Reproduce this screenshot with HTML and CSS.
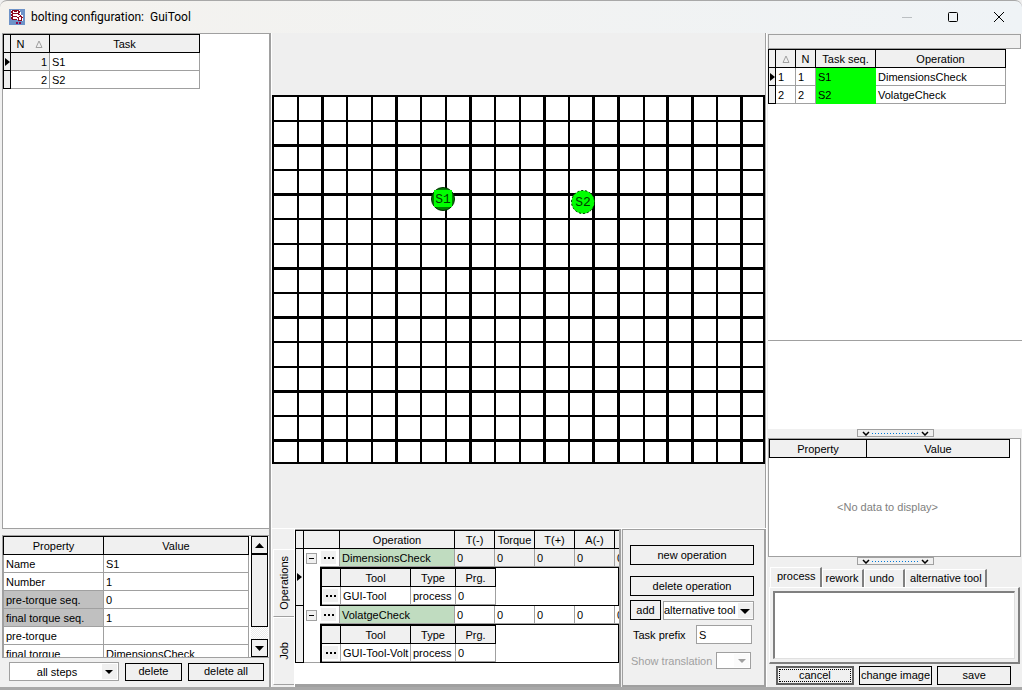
FILE: index.html
```html
<!DOCTYPE html>
<html lang="en">
<head>
<meta charset="utf-8">
<title>bolting configuration: GuiTool</title>
<link rel="stylesheet" href="styles.css">
</head>
<body>
<div class="window">
  <header class="titlebar">
    <svg class="app-icon" viewBox="0 0 16 16" shape-rendering="crispEdges">
      <rect width="16" height="16" fill="#6e93c8"/>
      <path d="M2 1h9v2h1v3h2v6h-4v-1H3v-1H2z" fill="#fff"/>
      <path d="M3 1h7v1H3zM2 2h2v2H2zM9 2h2v2H9zM3 4h7v1H3zM2 5h2v2H2zM3 7h5v1H3zM2 8h2v2H2zM3 10h5v1H3zM5 2h3v1H5zM9 5h2v1H9zM11 6h1v1h-1zM8 8h2v1H8zM10 7h3v1h-3zM12 8h2v1h-2zM9 9h1v3H9zM10 11h3v1h-3zM12 9h1v2h-1z" fill="#8c0c20"/>
      <path d="M7 13h2v2H7zM10 13h2v2h-2z" fill="#8c0c50"/>
    </svg>
    <h1 class="title">bolting configuration:&nbsp; GuiTool</h1>
    <button class="caption-button" type="button" aria-label="Minimize" disabled><svg viewBox="0 0 12 12"><path d="M1 6.500h10" stroke="#bbbfc2" fill="none"/></svg></button>
    <button class="caption-button" type="button" aria-label="Maximize"><svg viewBox="0 0 12 12"><rect x="1.500" y="1.500" width="9" height="9" rx="1" stroke="#000" fill="none"/></svg></button>
    <button class="caption-button" type="button" aria-label="Close"><svg viewBox="0 0 12 12"><path d="M1 1l10 10M11 1L1 11" stroke="#000" fill="none"/></svg></button>
  </header>

  <main class="workspace">
    <section class="left">
      <div class="task-list">
        <table class="grid task-table">
          <colgroup><col class="c-ind"><col class="c-n"><col class="c-task"></colgroup>
          <thead><tr><th class="first"></th><th class="sorted"><span>N</span><svg class="sort" viewBox="0 0 8 8"><path d="M4 1L1 7.500h6z"/></svg></th><th>Task</th></tr></thead>
          <tbody>
            <tr><td class="ind"><i class="pointer"></i></td><td class="num focused">1</td><td>S1</td></tr>
            <tr><td class="ind"></td><td class="num">2</td><td>S2</td></tr>
          </tbody>
        </table>
      </div>
      <div class="properties">
        <div class="prop-scroll">
          <div class="prop-view">
            <table class="grid prop-table">
              <colgroup><col class="c-prop"><col></colgroup>
              <thead><tr><th class="first">Property</th><th>Value</th></tr></thead>
              <tbody>
                <tr><td>Name</td><td>S1</td></tr>
                <tr><td>Number</td><td>1</td></tr>
                <tr><td class="locked">pre-torque seq.</td><td>0</td></tr>
                <tr><td class="locked">final torque seq.</td><td>1</td></tr>
                <tr><td>pre-torque</td><td></td></tr>
                <tr><td>final torque</td><td>DimensionsCheck</td></tr>
              </tbody>
            </table>
          </div>
          <div class="scrollbar">
            <button type="button" class="scroll-button" aria-label="Scroll up"><svg viewBox="0 0 9 5"><path d="M0 5L4.500 0L9 5z"/></svg></button>
            <div class="thumb"></div>
            <button type="button" class="scroll-button down" aria-label="Scroll down"><svg viewBox="0 0 9 5"><path d="M0 0h9L4.500 5z"/></svg></button>
          </div>
        </div>
        <div class="prop-actions">
          <span class="combo steps"><select aria-label="Steps"><option>all steps</option></select></span>
          <button type="button" class="button">delete</button>
          <button type="button" class="button wide">delete all</button>
        </div>
      </div>
    </section>

    <section class="center">
      <div class="canvas">
        <svg viewBox="0 0 493 369" role="img" aria-label="Task positions">
          <rect width="493" height="369" fill="#fff"/>
          <g stroke="#000" shape-rendering="crispEdges">
            <path stroke-width="2" d="M1 0v369M26 0v369M75 0v369M100 0v369M149 0v369M174 0v369M223 0v369M248 0v369M297 0v369M372 0v369M445 0v369M492 0v369M0 1h493M0 26h493M0 75h493M0 124h493M0 149h493M0 198h493M0 247h493M0 272h493M0 321h493M0 368h493"/>
            <path stroke-width="3" d="M50.500 0v369M124.500 0v369M198.500 0v369M272.500 0v369M321.500 0v369M346.500 0v369M395.500 0v369M420.500 0v369M469.500 0v369M0 50.500h493M0 99.500h493M0 173.500h493M0 222.500h493M0 296.500h493M0 345.500h493"/>
          </g>
          <g class="marker">
            <circle cx="171" cy="104" r="11.500" fill="#008000" stroke="#003000"/>
            <rect x="162" y="95" width="18" height="17" fill="#00ff00"/>
            <text x="171" y="108">S1</text>
          </g>
          <g class="marker">
            <circle cx="311" cy="107" r="11.500" fill="#00ff00" stroke="#003000" stroke-dasharray="2 2"/>
            <text x="311" y="111">S2</text>
          </g>
        </svg>
      </div>

      <div class="operations">
        <nav class="side-tabs">
          <button type="button" class="side-tab active"><span>Operations</span></button>
          <button type="button" class="side-tab"><span>Job</span></button>
        </nav>
        <div class="op-view">
          <table class="grid op-table">
            <colgroup><col class="c-opind"><col class="c-exp"><col class="c-dots"><col class="c-op"><col class="c-val"><col class="c-val"><col class="c-val"><col class="c-val"><col></colgroup>
            <thead><tr><th class="first"></th><th colspan="2"></th><th>Operation</th><th>T(-)</th><th>Torque</th><th>T(+)</th><th>A(-)</th><th class="last"></th></tr></thead>
            <tbody>
              <tr class="focused-row"><td class="ind" rowspan="2"><i class="pointer"></i></td><td class="exp"><button type="button" class="expander" aria-label="Collapse"></button></td><td class="tools"><button type="button" class="dots" aria-label="More"><i></i><i></i><i></i></button></td><td class="op-name">DimensionsCheck</td><td>0</td><td>0</td><td>0</td><td>0</td><td class="last">0</td></tr>
              <tr><td class="gutter"></td><td class="detail" colspan="7">
                <table class="grid tool-table">
                  <colgroup><col class="c-tdots"><col class="c-tool"><col class="c-type"><col class="c-prg"></colgroup>
                  <thead><tr><th></th><th>Tool</th><th>Type</th><th>Prg.</th></tr></thead>
                  <tbody><tr><td class="tools"><button type="button" class="dots" aria-label="More"><i></i><i></i><i></i></button></td><td>GUI-Tool</td><td>process</td><td>0</td></tr></tbody>
                </table></td></tr>
              <tr><td class="ind" rowspan="2"></td><td class="exp"><button type="button" class="expander" aria-label="Collapse"></button></td><td class="tools"><button type="button" class="dots" aria-label="More"><i></i><i></i><i></i></button></td><td class="op-name">VolatgeCheck</td><td>0</td><td>0</td><td>0</td><td>0</td><td class="last">0</td></tr>
              <tr><td class="gutter end"></td><td class="detail" colspan="7">
                <table class="grid tool-table">
                  <colgroup><col class="c-tdots"><col class="c-tool"><col class="c-type"><col class="c-prg"></colgroup>
                  <thead><tr><th></th><th>Tool</th><th>Type</th><th>Prg.</th></tr></thead>
                  <tbody><tr><td class="tools"><button type="button" class="dots" aria-label="More"><i></i><i></i><i></i></button></td><td>GUI-Tool-Volt</td><td>process</td><td>0</td></tr></tbody>
                </table></td></tr>
            </tbody>
          </table>
        </div>
        <form class="op-actions">
          <button type="button" class="button tall">new operation</button>
          <button type="button" class="button tall second">delete operation</button>
          <div class="row add-row">
            <button type="button" class="button tall add">add</button>
            <span class="combo alt"><select aria-label="Tool kind"><option>alternative tool</option></select></span>
          </div>
          <div class="row prefix-row">
            <label for="prefix">Task prefix</label>
            <input id="prefix" class="text" type="text" value="S">
          </div>
          <div class="row translation-row">
            <label for="translation">Show translation</label>
            <span class="combo translation"><select id="translation" disabled><option></option></select></span>
          </div>
        </form>
      </div>
    </section>

    <section class="right">
      <div class="sequence">
        <div class="group-bar"></div>
        <table class="grid seq-table">
          <colgroup><col class="c-ind"><col class="c-sn"><col class="c-sn"><col class="c-seq"><col class="c-sop"></colgroup>
          <thead><tr><th class="first"></th><th><svg class="sort" viewBox="0 0 8 8"><path d="M4 1L1 7.500h6z"/></svg></th><th>N</th><th>Task seq.</th><th>Operation</th></tr></thead>
          <tbody>
            <tr><td class="ind"><i class="pointer"></i></td><td>1</td><td>1</td><td class="done">S1</td><td>DimensionsCheck</td></tr>
            <tr><td class="ind"></td><td>2</td><td>2</td><td class="done">S2</td><td>VolatgeCheck</td></tr>
          </tbody>
        </table>
      </div>
      <div class="blank"></div>
      <div class="splitter"><button type="button" aria-label="Collapse panel"><svg viewBox="0 0 8 5"><path d="M1 1l3 3L7 1"/></svg><i></i><svg viewBox="0 0 8 5"><path d="M1 1l3 3L7 1"/></svg></button></div>
      <div class="details">
        <table class="grid detail-table">
          <colgroup><col class="c-dprop"><col class="c-dval"></colgroup>
          <thead><tr><th class="first">Property</th><th>Value</th></tr></thead>
        </table>
        <p class="empty">&lt;No data to display&gt;</p>
      </div>
      <div class="splitter"><button type="button" aria-label="Collapse panel"><svg viewBox="0 0 8 5"><path d="M1 1l3 3L7 1"/></svg><i></i><svg viewBox="0 0 8 5"><path d="M1 1l3 3L7 1"/></svg></button></div>
      <nav class="tabs">
        <button type="button" class="tab active">process</button>
        <button type="button" class="tab">rework</button>
        <button type="button" class="tab undo">undo</button>
        <button type="button" class="tab">alternative tool</button>
      </nav>
      <div class="page"><textarea aria-label="Process"></textarea></div>
      <footer class="footer">
        <button type="button" class="button default"><span>cancel</span></button>
        <button type="button" class="button">change image</button>
        <button type="button" class="button">save</button>
      </footer>
    </section>
  </main>
</div>
</body>
</html>
```
FILE: styles.css
```css
* { box-sizing: border-box; }

body {
  margin: 0;
  background: #b4b4b4;
  color: #000;
  font: 11px/14px "Liberation Sans", Arial, sans-serif;
}

button, select, input, textarea { font: inherit; color: inherit; margin: 0; border-radius: 0; }
button { padding: 0; background: #f0f0f0; border: 0; white-space: nowrap; }

.window {
  display: grid;
  grid-template-rows: 33px minmax(0, 1fr);
  height: 100vh;
  border-bottom: 3px solid #a8a8a8;
  background: #f0f0f0;
}

/* Title bar */
.titlebar {
  display: flex;
  align-items: center;
  padding: 0 0 0 9px;
  border-top: 1px solid #a8a8a8;
  border-radius: 7px 7px 0 0;
  background: linear-gradient(90deg, #f4f2ee, #eff3f6);
}
.app-icon { width: 16px; height: 16px; }
.title { flex: 1; margin: 0 0 0 6px; font: 12px/16px Roboto, "Noto Sans", sans-serif; }
.caption-button { display: grid; place-items: center; width: 46px; height: 30px; background: none; }
.caption-button svg { width: 12px; height: 12px; }

.workspace { display: grid; grid-template-columns: 271px minmax(0, 1fr) 256px; min-height: 0; }

/* Data grids */
.grid { border-collapse: separate; border-spacing: 0; table-layout: fixed; background: #fff; }
.grid th, .grid td { height: 18px; padding: 0 2px; overflow: hidden; white-space: nowrap; line-height: 16px; }
.grid th {
  height: 19px;
  border: solid #000;
  border-width: 1px 1px 1px 0;
  background: #f0f0f0;
  font-weight: normal;
  text-align: center;
}
.grid th.first { border-left-width: 1px; }
.grid td { border: solid #a0a0a0; border-width: 0 1px 1px 0; text-align: left; }
.grid td.ind { padding: 0; border: 1px solid #000; border-top: 0; background: #f0f0f0; }
.grid td.num { text-align: right; }
.grid td.focused { background: #f0f0f0; }
.grid td.locked { background: #c0c0c0; }
.grid td.done { background: #00ff00; border-color: #00ff00; }
.pointer {
  display: block;
  width: 5px;
  height: 8px;
  margin-left: 1px;
  border: solid transparent;
  border-width: 4px 0 4px 5px;
  border-left-color: #000;
}
.sort { width: 8px; height: 8px; fill: none; stroke: #a0a0a0; }
.sorted span { margin-right: 11px; }
.c-ind { width: 8px; }
.c-n { width: 39px; }
.c-task { width: 150px; }
.task-table { width: 197px; }

/* Left column */
.left { display: flex; flex-direction: column; min-height: 0; padding-left: 2px; border-right: 2px solid #a0a0a0; }
.task-list { flex: 1; min-height: 0; border: solid #a0a0a0; border-width: 1px 0 1px 1px; background: #fff; }
.properties { margin-top: 6px; border-top: 1px solid #a0a0a0; }
.prop-scroll { display: flex; height: 122px; border: solid #a0a0a0; border-width: 0 0 1px 1px; background: #fff; }
.prop-view { flex: 1; min-width: 0; overflow: hidden; }
.prop-table { width: 100%; }
.prop-table th.first, .prop-table td:first-child { border-left: 1px solid #a0a0a0; }
.prop-table th.first { border-left-color: #000; }
.c-prop { width: 101px; }
.scrollbar {
  display: flex;
  flex-direction: column;
  width: 17px;
  margin: 0 1px 0 2px;
  background: repeating-conic-gradient(#fff 0 25%, #eaeaea 0 50%) 0 0 / 2px 2px;
}
.scroll-button { display: grid; place-items: center; height: 18px; border: 1px solid #000; }
.scroll-button svg { width: 9px; height: 5px; }
.scroll-button.down { margin-top: auto; }
.thumb { height: 73px; border: 1px solid #000; background: #f0f0f0; }
.prop-actions { display: flex; align-items: center; gap: 6px; height: 29px; padding: 0 5px 2px 7px; }
.prop-actions .button { width: 57px; }
.prop-actions .button.wide { flex: 1; }

.button { height: 18px; border: 1px solid #000; text-align: center; line-height: 15px; }
.button.tall { height: 20px; }

.combo { position: relative; display: flex; height: 19px; border: 1px solid #a0a0a0; background: #fff; }
.combo select { appearance: none; width: 100%; padding: 0 16px 0 2px; border: 0; background: #fff; }
.combo::before { content: ""; position: absolute; top: 1px; right: 1px; bottom: 1px; width: 15px; background: #f0f0f0; }
.combo::after {
  content: "";
  position: absolute;
  top: 7px;
  right: 4px;
  border: solid transparent;
  border-width: 5px 5px 0;
  border-top-color: #000;
}
.combo.steps { width: 110px; }
.combo.steps select { text-align-last: center; }
.combo.steps::after { right: 5px; border-width: 4px 4px 0; }

/* Centre column */
.center { display: flex; flex-direction: column; min-width: 0; min-height: 0; border: solid #fff; border-width: 0 0 0 1px; }
.canvas { flex: 1; display: flex; align-items: center; min-height: 0; padding-bottom: 2px; border-right: 1px solid #a0a0a0; background: #efefef; }
.canvas svg { display: block; width: 100%; }
.marker text { font: 13px "Liberation Mono", monospace; text-anchor: middle; fill: #003c00; }

.operations { display: flex; height: 159px; border-top: 1px solid #fff; }
.side-tabs { display: flex; flex-direction: column; width: 23px; padding: 20px 0 2px 1px; border-right: 1px solid #fff; }
.side-tab {
  display: grid;
  place-items: center;
  flex: 1;
  border: 1px solid #fff;
  border-bottom-color: #a0a0a0;
  border-right: 0;
}
.side-tab span { writing-mode: vertical-rl; transform: rotate(180deg); }
.op-view { flex: 1; min-width: 0; overflow: hidden; border: solid #a0a0a0; border-width: 1px 2px 3px 0; background: #fff; }
.op-table { width: 100%; }
.c-opind { width: 9px; }
.c-exp { width: 16px; }
.c-dots { width: 20px; }
.c-op { width: 115px; }
.c-val { width: 40px; }
.grid td.exp { border: 0; background: #fff; }
.grid td.tools { padding: 0; background: #fff; }
.grid td.op-name { background: #c0dcc0; }
.grid .last { border-right: 0; padding-right: 0; }
.focused-row td { background: #f0f0f0; }
.grid td.gutter { border: 0; }
.grid td.gutter.end { border-bottom: 1px solid #a0a0a0; }
.grid td.detail { padding: 0; border: solid #000; border-width: 1px 1px 1px 2px; }
.expander {
  display: block;
  width: 11px;
  height: 11px;
  border: 1px solid #a0a0a0;
  background: linear-gradient(#000, #000) center / 5px 1px no-repeat #f0f0f0;
}
.dots { display: flex; align-items: center; justify-content: center; gap: 2px; width: 15px; height: 13px; margin-left: 1px; }
.dots i { width: 2px; height: 2px; background: #000; }
.tool-table { width: 174px; }
.c-tdots { width: 19px; }
.c-tool { width: 70px; }
.c-type { width: 45px; }
.c-prg { width: 40px; }

.op-actions { width: 144px; padding: 15px 10px 0 7px; border: solid #a0a0a0; border-width: 1px 2px 2px 1px; margin-left: 1px; }
.op-actions .button { display: block; width: 100%; }
.op-actions .second { margin-top: 11px; }
.row { display: flex; align-items: center; }
.add-row { gap: 2px; margin-top: 4px; }
.op-actions .add { width: 31px; }
.combo.alt { flex: 1; }
.combo.alt select { padding: 0; }
.combo.alt::before { right: 0; }
.combo.alt::after { right: 3px; }
.prefix-row { justify-content: space-between; margin-top: 5px; padding: 0 2px 0 3px; }
.text { width: 56px; height: 19px; padding: 0 2px; border: 1px solid #a0a0a0; background: #fff; }
.translation-row { justify-content: space-between; margin-top: 8px; padding: 0 3px 0 1px; color: #a0a0a0; }
.combo.translation { width: 35px; height: 17px; }
.combo.translation::after { top: 6px; border-width: 4px 4px 0; border-top-color: #a0a0a0; }

/* Right column */
.right { display: flex; flex-direction: column; min-height: 0; padding-left: 1px; border-left: 1px solid #fff; }
.sequence { flex: 307; min-height: 0; margin-top: 1px; border-bottom: 1px solid #a0a0a0; background: #fff; }
.group-bar { height: 15px; border: 1px solid #a0a0a0; background: #f0f0f0; margin-right: 1px; }
.seq-table { width: 238px; }
.c-sn { width: 20px; }
.c-seq { width: 60px; }
.c-sop { width: 130px; }
.blank { flex: 88; min-height: 0; background: #fff; }
.splitter { display: flex; justify-content: center; height: 9px; }
.splitter button { display: flex; align-items: center; justify-content: space-between; width: 77px; height: 8px; padding: 0 4px; border: 1px solid #a0a0a0; }
.splitter svg { width: 8px; height: 5px; fill: none; stroke: #000; stroke-width: 1.5; }
.splitter i { width: 46px; height: 1px; background: repeating-linear-gradient(90deg, #0078d7 0 1px, transparent 1px 3px); }
.details { display: flex; flex-direction: column; height: 119px; margin-right: 1px; border: 1px solid #a0a0a0; background: #fff; }
.detail-table { width: 241px; }
.c-dprop { width: 98px; }
.c-dval { width: 143px; }
.empty { margin: 42px 14px 0 0; text-align: center; color: #808080; }
.tabs { display: flex; align-items: flex-end; height: 21px; padding-left: 2px; }
.tab { height: 18px; padding: 0 3px; border: solid; border-width: 1px 2px 0 1px; border-color: #fff #808080 #fff #fff; line-height: 15px; }
.tab.active { height: 20px; padding: 0 4px 2px 6px; }
.tab.undo { padding: 0 9px 0 5px; }
.tab:last-child { padding: 0 3px 0 4px; }
.page { height: 77px; padding: 3px; margin: 0 2px 0 1px; border: solid; border-width: 1px 2px 2px 1px; border-color: #fff #808080 #808080 #fff; }
.page textarea { display: block; width: 100%; height: 100%; resize: none; border: solid; border-width: 2px 1px 1px 2px; border-color: #808080 #e0e0e0 #e0e0e0 #808080; background: #fff; }
.footer { display: flex; gap: 5px; height: 23px; padding: 2px 11px 2px 8px; }
.footer .button { flex: 1 1 0; height: 19px; }
.footer .default { padding: 1px; border: 2px solid #606060; line-height: 11px; }
.default span { display: block; height: 100%; border: 1px dotted #000; }
```
